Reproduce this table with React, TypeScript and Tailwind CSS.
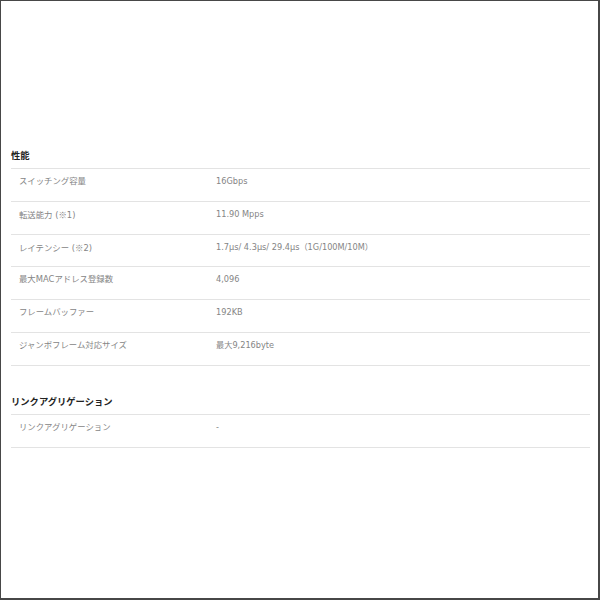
import React from "react";

type Row = { label: React.ReactNode; value: React.ReactNode; key: string };

const Kome = () => (
  <span style={{ fontFamily: '"Noto Sans CJK JP", sans-serif' }}>※</span>
);

const sections: { title: string; rows: Row[] }[] = [
  {
    title: "性能",
    rows: [
      { key: "a", label: "スイッチング容量", value: "16Gbps" },
      { key: "b", label: <>転送能力 (<Kome />1)</>, value: "11.90 Mpps" },
      {
        key: "c",
        label: <>レイテンシー (<Kome />2)</>,
        value: "1.7μs/ 4.3μs/ 29.4μs（1G/100M/10M）",
      },
      { key: "d", label: "最大MACアドレス登録数", value: "4,096" },
      { key: "e", label: "フレームバッファー", value: "192KB" },
      { key: "f", label: "ジャンボフレーム対応サイズ", value: "最大9,216byte" },
    ],
  },
  {
    title: "リンクアグリゲーション",
    rows: [{ key: "g", label: "リンクアグリゲーション", value: "-" }],
  },
];

export default function App() {
  return (
    <div
      className="w-[600px] h-[600px] bg-white border-l border-t border-r-2 border-b-2 border-[#474747] pl-[10px] pr-[8px] pt-[148px]"
      style={{ fontFamily: '"DejaVu Sans", "Noto Sans CJK JP", sans-serif' }}
    >
      <div className="flex flex-col gap-[29px]">
        {sections.map((s) => (
          <div key={s.title}>
            <div className="border-b border-[#e3e3e3] pb-[5px] text-[9.3px] leading-[14px] font-bold text-[#222]">
              {s.title}
            </div>
            {s.rows.map((r) => (
              <div
                key={r.key}
                className="flex h-[32.83px] border-b border-[#e3e3e3] pt-[6px] leading-[12px] text-[#858585]"
              >
                <div className="w-[205px] pl-[8px] text-[8.4px]">{r.label}</div>
                <div className="flex-1 text-[8.2px]">{r.value}</div>
              </div>
            ))}
          </div>
        ))}
      </div>
    </div>
  );
}
